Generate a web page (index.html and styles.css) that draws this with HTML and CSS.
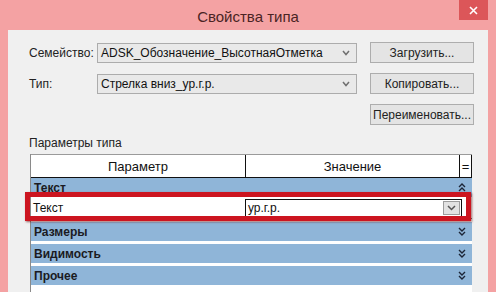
FILE: index.html
```html
<!DOCTYPE html>
<html lang="ru">

<head>
    <meta charset="UTF-8">
    <title>Свойства типа</title>
    <link rel="stylesheet" href="styles.css">
</head>

<body>
    <div class="window">
        <div class="titlebar">
            <span class="title">Свойства типа</span>
            <div class="close">
                <svg width="9" height="9" viewBox="0 0 9 9"><path d="M1 1L8 8M8 1L1 8" stroke="#fff" stroke-width="1.6"/></svg>
            </div>
        </div>

        <div class="client">
            <div class="form-row">
                <span class="label">Семейство:</span>
                <div class="combo">
                    <span>ADSK_Обозначение_ВысотнаяОтметка</span>
                    <svg width="8" height="6" viewBox="0 0 8 6"><path d="M1 1L4 4.5L7 1" fill="none" stroke="#6f6f6f" stroke-width="1.5"/></svg>
                </div>
                <div class="btn">Загрузить...</div>
            </div>
            <div class="form-row">
                <span class="label">Тип:</span>
                <div class="combo">
                    <span>Стрелка вниз_ур.г.р.</span>
                    <svg width="8" height="6" viewBox="0 0 8 6"><path d="M1 1L4 4.5L7 1" fill="none" stroke="#6f6f6f" stroke-width="1.5"/></svg>
                </div>
                <div class="btn">Копировать...</div>
            </div>
            <div class="form-row end">
                <div class="btn">Переименовать...</div>
            </div>

            <div class="section-label">Параметры типа</div>

            <div class="grid">
                <div class="grid-head">
                    <div class="hcell param">Параметр</div>
                    <div class="hcell value">Значение</div>
                    <div class="hcell eq">=</div>
                </div>

                <div class="group first">
                    <span>Текст</span>
                    <svg width="8" height="9" viewBox="0 0 8 9"><path d="M1 4L4 1L7 4M1 8L4 5L7 8" fill="none" stroke="#1c2536" stroke-width="1.4"/></svg>
                </div>
                <div class="prop">
                    <div class="pname">Текст</div>
                    <div class="editor">
                        <span>ур.г.р.</span>
                        <div class="drop">
                            <svg width="9" height="6" viewBox="0 0 9 6"><path d="M1 1L4.5 4.5L8 1" fill="none" stroke="#555" stroke-width="1.5"/></svg>
                        </div>
                    </div>
                </div>
                <div class="group">
                    <span>Размеры</span>
                    <svg width="8" height="9" viewBox="0 0 8 9"><path d="M1 1L4 4L7 1M1 5L4 8L7 5" fill="none" stroke="#1c2536" stroke-width="1.4"/></svg>
                </div>
                <div class="group">
                    <span>Видимость</span>
                    <svg width="8" height="9" viewBox="0 0 8 9"><path d="M1 1L4 4L7 1M1 5L4 8L7 5" fill="none" stroke="#1c2536" stroke-width="1.4"/></svg>
                </div>
                <div class="group">
                    <span>Прочее</span>
                    <svg width="8" height="9" viewBox="0 0 8 9"><path d="M1 1L4 4L7 1M1 5L4 8L7 5" fill="none" stroke="#1c2536" stroke-width="1.4"/></svg>
                </div>

                <div class="highlight"></div>
            </div>
        </div>
    </div>
</body>

</html>
```

FILE: styles.css
```css
body {
    margin: 0;
    width: 496px;
    height: 292px;
    overflow: hidden;
    background: #f4a2a3;
    font-family: "Liberation Sans", Arial, sans-serif;
    font-size: 12px;
    color: #111;
}

.window {
    height: 292px;
}

.titlebar {
    position: relative;
    height: 30px;
    display: flex;
    align-items: center;
    justify-content: center;
}

.title {
    font-size: 15px;
    color: #4a2424;
    padding-top: 3px;
}

.close {
    position: absolute;
    top: 0;
    right: 8px;
    width: 29px;
    height: 20px;
    background: #dc5659;
    display: flex;
    align-items: center;
    justify-content: center;
}

.client {
    margin: 0 8px;
    height: 262px;
    box-sizing: border-box;
    background: #f0f0f0;
    padding: 12px 0 0 21px;
}

.form-row {
    display: flex;
    align-items: center;
    height: 21px;
    margin-bottom: 10px;
    width: 445px;
}

.form-row.end {
    justify-content: flex-end;
    margin-bottom: 0;
}

.label {
    width: 68px;
    flex: none;
    color: #222;
}

.combo {
    width: 260px;
    flex: none;
    height: 20px;
    box-sizing: border-box;
    border: 1px solid #acacac;
    background: #e9e9e9;
    display: flex;
    align-items: center;
    justify-content: space-between;
    padding: 0 6px 0 3px;
    color: #111;
}

.btn {
    width: 104px;
    flex: none;
    margin-left: 13px;
    height: 21px;
    box-sizing: border-box;
    border: 1px solid #adadad;
    background: #e4e4e4;
    display: flex;
    align-items: center;
    justify-content: center;
    color: #222;
}

.section-label {
    margin-top: 11px;
    line-height: 14px;
    color: #222;
}

.grid {
    position: relative;
    margin: 4px 0 0 1px;
    width: 442px;
    height: 138px;
    box-sizing: border-box;
    background: #fff;
    border-left: 1px solid #8a8a8a;
}

.grid-head {
    display: flex;
    height: 24px;
    box-sizing: border-box;
    border-top: 1px solid #9a9a9a;
    border-bottom: 1px solid #111;
    font-size: 13px;
}

.hcell {
    box-sizing: border-box;
    border-right: 1px solid #111;
    display: flex;
    align-items: center;
    justify-content: center;
}

.param {
    width: 215px;
}

.value {
    width: 214px;
}

.eq {
    width: 12px;
}

.group {
    height: 19px;
    margin-top: 3px;
    background: #8fb5d8;
    display: flex;
    align-items: center;
    justify-content: space-between;
    padding: 0 6px 0 3px;
    font-weight: bold;
    color: #1b1b22;
}

.group.first {
    margin-top: 0;
}

.prop {
    display: flex;
    height: 21px;
    border-bottom: 1px dotted #777;
}

.pname {
    width: 214px;
    padding-left: 2px;
    box-sizing: border-box;
    display: flex;
    align-items: center;
}

.editor {
    width: 217px;
    height: 18px;
    margin-top: 2px;
    box-sizing: border-box;
    border: 1px solid #111;
    display: flex;
    align-items: center;
    justify-content: space-between;
    padding: 0 1px 0 2px;
}

.drop {
    width: 17px;
    height: 14px;
    box-sizing: border-box;
    border: 1px solid #9c9c9c;
    background: #e2e2e2;
    display: flex;
    align-items: center;
    justify-content: center;
}

.highlight {
    position: absolute;
    left: -6px;
    top: 38px;
    width: 446px;
    height: 29px;
    box-sizing: border-box;
    border: 5px solid #cc1520;
    box-shadow: 1px 1px 2px rgba(90, 0, 0, 0.6);
}
```
